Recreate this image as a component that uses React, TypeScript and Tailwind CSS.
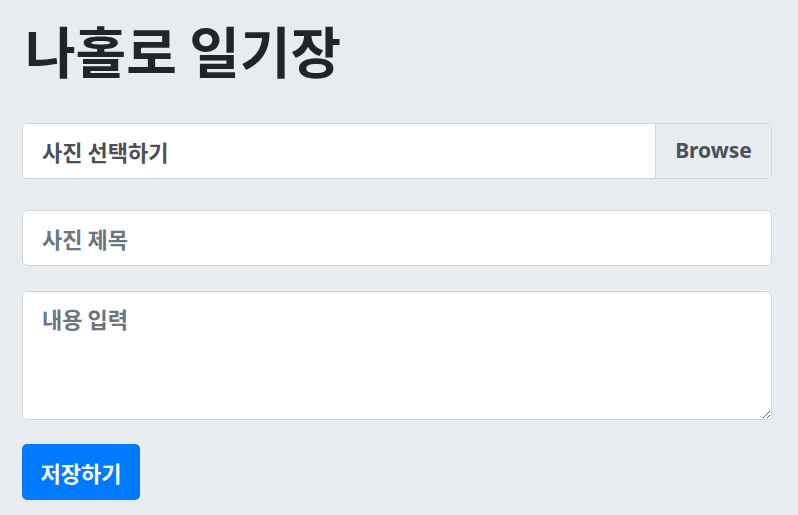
import React from "react";

export default function App() {
  return (
    <div className="min-h-[515px] w-full bg-[#e9ecef] px-[22px] pt-[16px] font-['Noto_Sans_CJK_KR','Noto_Sans',sans-serif]">
      <h1 className="mb-[40px] pl-[3px] text-[55px] font-bold leading-[67px] text-[#212529]">나홀로 일기장</h1>
      <div className="flex flex-col items-start">
        <div className="flex h-[56px] w-[750px] overflow-hidden rounded-[5px] border border-[#ced4da] bg-white">
          <div className="flex flex-1 items-center pl-[19px] text-[22px] font-bold text-[#495057]">사진 선택하기</div>
          <div className="flex w-[116px] items-center justify-center border-l border-[#ced4da] bg-[#e9ecef] font-['Noto_Sans',sans-serif] text-[21px] font-bold text-[#495057]">Browse</div>
        </div>
        <input
          className="mt-[31px] block h-[56px] w-[750px] rounded-[5px] border border-[#ced4da] bg-white pl-[19px] font-['Noto_Sans_CJK_KR',sans-serif] text-[22px] font-bold text-[#495057] outline-none placeholder:text-[#6c757d]"
          placeholder="사진 제목"
        />
        <textarea
          className="mt-[25px] block h-[129px] w-[750px] rounded-[5px] border border-[#ced4da] bg-white px-[19px] pt-[10px] font-['Noto_Sans_CJK_KR',sans-serif] text-[22px] font-bold text-[#495057] outline-none placeholder:text-[#6c757d]"
          placeholder="내용 입력"
        />
        <button className="mt-[24px] flex h-[56px] w-[118px] items-center justify-center rounded-[5px] bg-[#007bff] font-['Noto_Sans_CJK_KR',sans-serif] text-[22px] font-bold text-white">저장하기</button>
      </div>
    </div>
  );
}
